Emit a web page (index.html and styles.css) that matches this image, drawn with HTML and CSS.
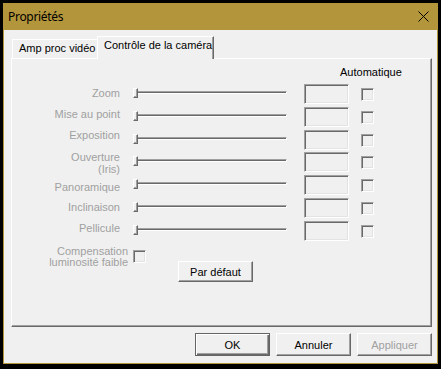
FILE: index.html
```html
<!DOCTYPE html>
<html lang="fr">
<head>
<meta charset="utf-8">
<title>Propriétés</title>
<link rel="stylesheet" href="styles.css">
</head>
<body>
<div class="window">
  <div class="titlebar">
    <span class="title">Propriétés</span>
    <svg class="close" width="11" height="11" viewBox="0 0 11 11"><path d="M0.5 0.5 L10.5 10.5 M10.5 0.5 L0.5 10.5" stroke="#000" stroke-width="1" fill="none"/></svg>
  </div>
  <div class="body">
    <div class="tabs">
      <div class="tab">Amp proc vidéo</div>
      <div class="tab active">Contrôle de la caméra</div>
    </div>
    <div class="panel">
      <div class="auto-head">Automatique</div>
      <div class="controls">
        <div class="labels">
          <div class="lab h21">Zoom</div>
          <div class="lab h21">Mise au point</div>
          <div class="lab h22">Exposition</div>
          <div class="lab h30">Ouverture<br>(Iris)</div>
          <div class="lab h20">Panoramique</div>
          <div class="lab h21">Inclinaison</div>
          <div class="lab h12">Pellicule</div>
        </div>
        <div class="rows">
          <div class="row"><div class="slider"><div class="track"></div><div class="thumb"></div></div><div class="edit"></div><div class="check"></div></div>
          <div class="row"><div class="slider"><div class="track"></div><div class="thumb"></div></div><div class="edit"></div><div class="check"></div></div>
          <div class="row short"><div class="slider"><div class="track"></div><div class="thumb"></div></div><div class="edit"></div><div class="check"></div></div>
          <div class="row"><div class="slider"><div class="track"></div><div class="thumb"></div></div><div class="edit"></div><div class="check"></div></div>
          <div class="row"><div class="slider"><div class="track"></div><div class="thumb"></div></div><div class="edit"></div><div class="check"></div></div>
          <div class="row"><div class="slider"><div class="track"></div><div class="thumb"></div></div><div class="edit"></div><div class="check"></div></div>
          <div class="row last"><div class="slider"><div class="track"></div><div class="thumb"></div></div><div class="edit"></div><div class="check"></div></div>
        </div>
      </div>
      <div class="comp">
        <div class="comp-label">Compensation<br>luminosité faible</div>
        <div class="check comp-check"></div>
        <div class="btn default-btn">Par défaut</div>
      </div>
    </div>
    <div class="buttons">
      <div class="btn ok">OK</div>
      <div class="btn">Annuler</div>
      <div class="btn disabled">Appliquer</div>
    </div>
  </div>
</div>
</body>
</html>
```

FILE: styles.css
```css
html, body {
  margin: 0;
  padding: 0;
  background: #000;
}
body {
  width: 441px;
  height: 369px;
  overflow: hidden;
  font-family: "Liberation Sans", Arial, sans-serif;
  font-size: 11px;
  line-height: 12px;
  color: #000;
}
.window {
  margin: 3px 0 0 3px;
  width: 433px;
  height: 359px;
  border: 1px solid #b3953b;
  background: #f0f0f0;
}
.titlebar {
  height: 26px;
  background: #b3953b;
  display: flex;
  align-items: center;
  justify-content: space-between;
  padding-left: 4px;
}
.title {
  font-family: "Noto Sans", "Open Sans", sans-serif;
  font-size: 12px;
  letter-spacing: -0.3px;
  line-height: 16px;
  color: #000;
  margin-top: -1px;
}
.close {
  margin-right: 8px;
  margin-top: -1px;
  display: block;
}
.body {
  padding: 6px 5px 0 7px;
}
.tabs {
  display: flex;
  align-items: flex-end;
  height: 22px;
  padding-left: 1px;
}
.tab {
  box-sizing: border-box;
  height: 19px;
  width: 85px;
  padding: 2px 0 0 6px;
  border-top: 1px solid #fff;
  border-left: 1px solid #fff;
  white-space: nowrap;
}
.tab.active {
  position: relative;
  z-index: 1;
  height: 23px;
  width: 117px;
  margin-bottom: -1px;
  padding-top: 2px;
  background: #f0f0f0;
  border-right: 1px solid #696969;
  box-shadow: inset -1px 0 #a0a0a0;
}
.panel {
  box-sizing: border-box;
  width: 421px;
  height: 269px;
  border-top: 1px solid #fff;
  border-left: 1px solid #fff;
  border-right: 1px solid #696969;
  border-bottom: 1px solid #696969;
  box-shadow: inset -1px -1px #a0a0a0;
}
.auto-head {
  margin-top: 7px;
  padding-left: 328px;
  height: 12px;
}
.controls {
  display: flex;
  margin-top: 6px;
}
.labels {
  width: 121px;
  box-sizing: border-box;
  padding-right: 13px;
  margin-top: 3px;
  text-align: right;
  color: #a0a0a0;
}
.lab { white-space: nowrap; }
.h21 { height: 21px; }
.h22 { height: 22px; }
.h30 { height: 30px; }
.h20 { height: 20px; }
.h12 { height: 12px; }
.rows {
  display: flex;
  flex-direction: column;
}
.row {
  display: flex;
  align-items: flex-start;
  height: 23px;
}
.row.short { height: 22px; }
.row.last { height: 20px; }
.slider {
  position: relative;
  width: 171px;
  height: 20px;
}
.track {
  margin-top: 7px;
  width: 152px;
  height: 1px;
  border: 1px solid;
  border-color: #a0a0a0 #fff #fff #a0a0a0;
  background: #696969;
}
.thumb {
  position: absolute;
  left: 0;
  top: 4px;
  box-sizing: border-box;
  width: 5px;
  height: 10px;
  background: #f0f0f0;
  border-top: 1px solid #fff;
  border-left: 1px solid #fff;
  border-right: 1px solid #696969;
  border-bottom: 1px solid #696969;
  box-shadow: inset -1px -1px #a0a0a0;
}
.edit {
  box-sizing: border-box;
  width: 45px;
  height: 20px;
  border: 1px solid;
  border-color: #a0a0a0 #fff #fff #a0a0a0;
  box-shadow: inset 1px 1px #696969, inset -1px -1px #e3e3e3;
  background: #f0f0f0;
}
.check {
  box-sizing: border-box;
  width: 13px;
  height: 13px;
  margin-left: 12px;
  margin-top: 4px;
  border: 1px solid;
  border-color: #a0a0a0 #fff #fff #a0a0a0;
  box-shadow: inset 1px 1px #696969, inset -1px -1px #e3e3e3;
  background: #f0f0f0;
}
.comp {
  display: flex;
  align-items: flex-start;
  margin-top: 4px;
}
.comp-label {
  width: 116px;
  text-align: right;
  color: #a0a0a0;
  white-space: nowrap;
  line-height: 11px;
  padding-top: 1px;
}
.check.comp-check {
  margin-left: 5px;
  margin-top: 5px;
}
.btn {
  box-sizing: border-box;
  width: 75px;
  height: 23px;
  display: flex;
  align-items: center;
  justify-content: center;
  background: #f0f0f0;
  border: 1px solid;
  border-color: #fff #696969 #696969 #fff;
  box-shadow: inset -1px -1px #a0a0a0;
  white-space: nowrap;
}
.default-btn {
  height: 21px;
  margin-left: 32px;
  margin-top: 16px;
}
.buttons {
  display: flex;
  justify-content: flex-end;
  gap: 6px;
  margin-top: 6px;
}
.btn.ok {
  border: 1px solid #646464;
  box-shadow: inset 1px 1px #fff, inset -1px -1px #696969, inset -2px -2px #a0a0a0;
}
.btn.disabled {
  color: #a0a0a0;
}
```
